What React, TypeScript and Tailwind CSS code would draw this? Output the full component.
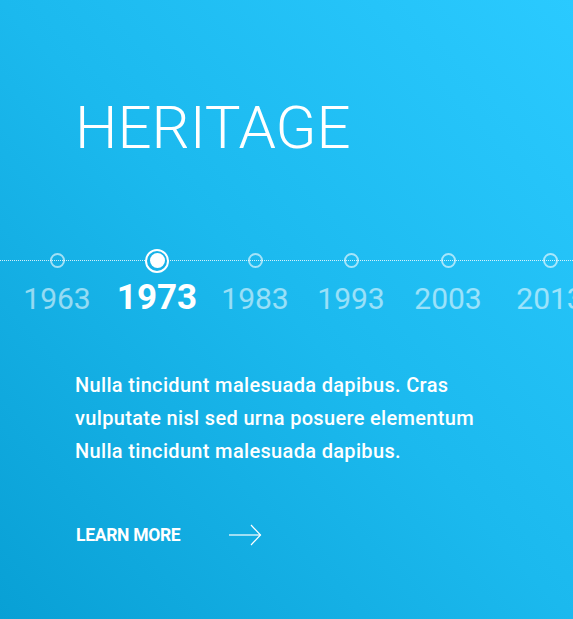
const years = [
  { year: '1963', w: 'w-[98px]' },
  { year: '1973', w: 'w-[102px]' },
  { year: '1983', w: 'w-[94px]' },
  { year: '1993', w: 'w-[98px]' },
  { year: '2003', w: 'w-[96px]' },
  { year: '2013', w: 'w-[108px]' },
];
const active = '1973';

export default function App() {
  return (
    <div
      className="w-[573px] h-[619px] overflow-hidden bg-gradient-to-tr from-[#08a0d5] via-[#1bb9ee] to-[#2acaff] text-white"
      style={{ fontFamily: 'Roboto, "Noto Sans", sans-serif' }}
    >
      <h1 className="pt-[93px] pl-[75px] text-[60px] font-light leading-[70px]">
        HERITAGE
      </h1>

      <div className="relative mt-[90px]">
        <div className="absolute left-0 right-0 top-[7px] border-t border-dotted border-white/80" />
        <div className="relative flex pl-[8px] whitespace-nowrap">
          {years.map(({ year, w }) => {
            const on = year === active;
            return (
              <div key={year} className={`${w} shrink-0 flex flex-col items-center`}>
                <div className="h-[15px] flex items-center justify-center">
                  {on ? (
                    <span className="w-[24px] h-[24px] rounded-full border-2 border-white flex items-center justify-center bg-[#18b2e8]">
                      <span className="w-[15px] h-[15px] rounded-full bg-white" />
                    </span>
                  ) : (
                    <span className="w-[15px] h-[15px] rounded-full border-2 border-white/60" />
                  )}
                </div>
                <span
                  className={
                    on
                      ? 'mt-[10px] text-[35px] font-bold leading-[40px] text-white'
                      : 'mt-[12px] text-[30px] leading-[38px] text-white/55'
                  }
                >
                  {year}
                </span>
              </div>
            );
          })}
        </div>
      </div>

      <p className="mt-[51px] pl-[75px] w-[560px] text-[20px] font-medium leading-[33px] tracking-[0.33px]">
        Nulla tincidunt malesuada dapibus. Cras
        <br />
        vulputate nisl sed urna posuere elementum
        <br />
        Nulla tincidunt malesuada dapibus.
      </p>

      <div className="mt-[56px] pl-[76px] flex items-center">
        <span className="text-[17.5px] font-bold leading-[20px] tracking-[-0.3px]">LEARN MORE</span>
        <svg className="ml-[49px] w-[33px] h-[22px]" viewBox="0 0 33 22" fill="none" stroke="currentColor" strokeWidth={1.2}>
          <path d="M0 11H31.5" />
          <path d="M22 1L31.5 11L22 21" />
        </svg>
      </div>
    </div>
  );
}
